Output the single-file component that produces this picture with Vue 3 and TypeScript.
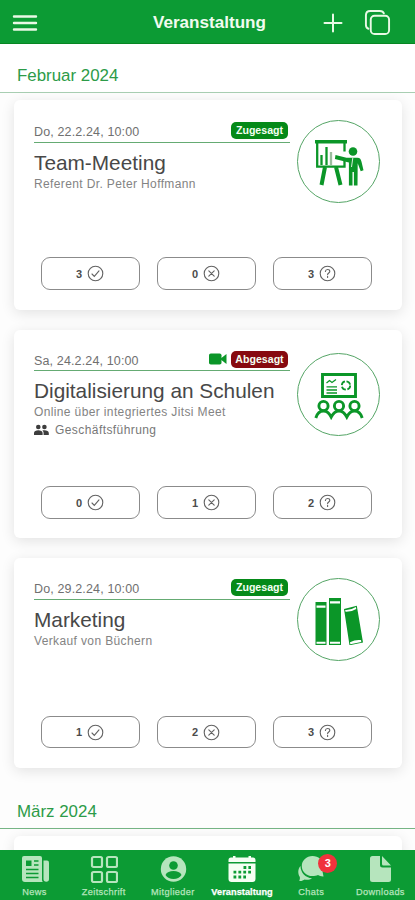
<script setup lang="ts">
type Reply = 'yes' | 'no' | 'maybe'
interface EventItem {
  id: string
  date: string
  title: string
  subtitle: string
  group?: string
  online?: boolean
  status: 'Zugesagt' | 'Abgesagt'
  icon: 'presenter' | 'class' | 'books'
  counts: { kind: Reply; value: number }[]
}
interface Tab {
  label: string
  icon: string
  active?: boolean
  badge?: number
}

const replies = (yes: number, no: number, maybe: number): EventItem['counts'] => [
  { kind: 'yes', value: yes },
  { kind: 'no', value: no },
  { kind: 'maybe', value: maybe },
]

const events: EventItem[] = [
  {
    id: 'team',
    date: 'Do, 22.2.24, 10:00',
    title: 'Team-Meeting',
    subtitle: 'Referent Dr. Peter Hoffmann',
    status: 'Zugesagt',
    icon: 'presenter',
    counts: replies(3, 0, 3),
  },
  {
    id: 'digital',
    date: 'Sa, 24.2.24, 10:00',
    title: 'Digitalisierung an Schulen',
    subtitle: 'Online über integriertes Jitsi Meet',
    group: 'Geschäftsführung',
    online: true,
    status: 'Abgesagt',
    icon: 'class',
    counts: replies(0, 1, 2),
  },
  {
    id: 'marketing',
    date: 'Do, 29.2.24, 10:00',
    title: 'Marketing',
    subtitle: 'Verkauf von Büchern',
    status: 'Zugesagt',
    icon: 'books',
    counts: replies(1, 2, 3),
  },
]

const tabs: Tab[] = [
  { label: 'News', icon: 'news' },
  { label: 'Zeitschrift', icon: 'grid' },
  { label: 'Mitglieder', icon: 'person' },
  { label: 'Veranstaltung', icon: 'calendar', active: true },
  { label: 'Chats', icon: 'chat', badge: 3 },
  { label: 'Downloads', icon: 'file' },
]
</script>

<template>
  <div class="screen">
    <header class="topbar">
      <button class="bar-btn" aria-label="Menü">
        <svg width="26" height="18" viewBox="0 0 26 18" class="line-icon menu">
          <path d="M2 2.500h22M2 9h22M2 15.500h22" />
        </svg>
      </button>
      <h1>Veranstaltung</h1>
      <div class="bar-actions">
        <button class="bar-btn plus" aria-label="Neu">
          <svg width="20" height="20" viewBox="0 0 20 20" class="line-icon">
            <path d="M10 1.500v17M1.500 10h17" />
          </svg>
        </button>
        <button class="bar-btn" aria-label="Kopien">
          <svg width="27" height="27" viewBox="0 0 28 28" class="line-icon">
            <rect x="7" y="7" width="19" height="19" rx="4" />
            <path d="M4.600 20.500C2.800 19.800 2 18.500 2 16.500V6.500C2 3.500 3.500 2 6.500 2h10C18.500 2 20 2.800 20.600 4.500" />
          </svg>
        </button>
      </div>
    </header>

    <main class="content">
      <h2 class="month">Februar 2024</h2>
      <div class="cards">
        <article v-for="e in events" :key="e.id" class="card" :class="'card-' + e.id">
          <div class="top">
            <div class="info">
              <div class="meta">
                <span class="date">{{ e.date }}</span>
                <svg v-if="e.online" class="video" width="18" height="12" viewBox="0 0 18 12">
                  <rect x="0" y="0.500" width="12.500" height="11" rx="1.800" />
                  <path d="M12 5.300 17.500 1v10L12 6.700z" />
                </svg>
                <span class="badge" :class="{ declined: e.status === 'Abgesagt' }">{{ e.status }}</span>
              </div>
              <h3>{{ e.title }}</h3>
              <p class="sub">{{ e.subtitle }}</p>
              <p v-if="e.group" class="group">
                <svg width="15" height="12" viewBox="0 0 15 12">
                  <circle cx="4.300" cy="3" r="2.300" />
                  <circle cx="10.400" cy="3" r="2.300" />
                  <path d="M0 11V9c0-2 2-2.800 4.300-2.800S8.600 7 8.600 9v2zM9.600 11V9c0-1.100-.5-2-1.200-2.600.6-.2 1.300-.2 2-.2 2.300 0 4.400.8 4.400 2.800v2z" />
                </svg>
                <span>{{ e.group }}</span>
              </p>
            </div>
            <div class="avatar">
              <svg v-if="e.icon === 'presenter'" width="50" height="50" viewBox="0 0 50 50">
                <path d="M1 3h32v3.500H1z" />
                <path d="M3.200 6v23.700h27.300V24M30.500 6v8.500" class="s2" />
                <path d="M11 30 7.500 48M22 30l4.500 18" class="s4" />
                <path d="M7.500 18v10M12.500 10v18" class="s2" />
                <path d="M17 15v13" class="s2 pale" />
                <circle cx="39" cy="14.500" r="4.300" />
                <path d="M21.500 18 32.500 20.800h11c2.500 0 3.300 1.500 4 4l2 8.500-2.800 1-3-8-.2 22.200h-3.600V35h-1.400v13.500h-3.600V25.500l-14-3.500z" />
                <path d="m38.800 21-1.300 9" class="slit" />
              </svg>
              <svg v-else-if="e.icon === 'class'" width="50" height="50" viewBox="0 0 50 50">
                <path d="M8.500 4.500h33v22h-33z" class="s3" />
                <path d="m12.500 13 3-2.500 2.500 2 4-3M12.500 16.800h10.500M12.500 20h10.500M12.500 23h10.500" class="s1" />
                <circle cx="32" cy="15.500" r="4.200" class="s1 ring" />
                <g class="s3">
                  <circle cx="9.500" cy="36" r="4.600" />
                  <circle cx="25" cy="36" r="4.600" />
                  <circle cx="40.500" cy="36" r="4.600" />
                  <path d="M1.800 48C3 44 5.500 41 9.500 41s6 2.500 7.700 6c1.800-3.500 3.800-6 7.800-6s6 2.500 7.800 6c1.700-3.500 3.700-6 7.700-6s6.500 3 7.700 7" />
                </g>
              </svg>
              <svg v-else width="50" height="50" viewBox="0 0 50 50">
                <path d="M1.500 7h11v43h-11zM15 3h12v47H15zM30 14l12.800-3.300L49 47.500l-13.500 2.800z" />
                <path d="M2.500 10.500h9v2.300h-9zM2.500 46.800h9v2h-9zM16 6.300h10v2.300H16zM16 46.800h10v2H16zM31.200 15q5.700.4 10.700-2.900l.3 1.800q-5 3.200-10.700 2.900zM36 47.300q5.500-3 11-2.200l.3 1.800-11 2.300z" class="white" />
              </svg>
            </div>
          </div>
          <div class="replies">
            <button v-for="c in e.counts" :key="c.kind" class="reply">
              <span>{{ c.value }}</span>
              <svg width="17" height="17" viewBox="0 0 17 17">
                <circle cx="8.500" cy="8.500" r="7.300" />
                <path v-if="c.kind === 'yes'" d="m5 9 2.300 2.400L12 5.800" />
                <path v-else-if="c.kind === 'no'" d="m5.800 5.800 5.400 5.400M11.200 5.800l-5.400 5.400" />
                <path v-else d="M6.400 6.500c.1-1.300 1-2 2.200-2s2.200.7 2.200 1.900c0 1.500-2.200 1.700-2.200 3.200M8.600 11.300v1.200" />
              </svg>
            </button>
          </div>
        </article>
      </div>
      <h2 class="month second">März 2024</h2>
      <div class="next-card"></div>
    </main>

    <nav class="tabbar">
      <a v-for="t in tabs" :key="t.label" class="tab" :class="{ active: t.active }">
        <span class="tab-icon">
          <svg width="28" height="28" viewBox="0 0 28 28">
            <template v-if="t.icon === 'news'">
              <path d="M3 1h16a2 2 0 0 1 2 2v21.500c0 1 .3 2 .9 2.500H4a3 3 0 0 1-3-3V3a2 2 0 0 1 2-2z" />
              <path d="M22.500 5.500H26a2 2 0 0 1 2 2V24a2.700 2.700 0 0 1-5.500 0z" />
              <path d="M5 5.500h5.500V11H5z" class="cut" />
              <path d="M13 6h4.500M13 10h4.500M5 14.500h12.500M5 18.500h12.500M5 22.500h12.500" class="cutline" />
            </template>
            <g v-else-if="t.icon === 'grid'" class="outline">
              <rect x="2" y="2" width="10" height="10" rx="1.500" />
              <rect x="17" y="2" width="10" height="10" rx="1.500" />
              <rect x="2" y="17" width="10" height="10" rx="1.500" />
              <rect x="17" y="17" width="10" height="10" rx="1.500" />
            </g>
            <template v-else-if="t.icon === 'person'">
              <circle cx="14.500" cy="14" r="12.700" />
              <circle cx="14.500" cy="10.500" r="4.300" class="cut" />
              <path d="M6.500 20c1.300-3 4.300-4 8-4s6.700 1 8 4c-1.700 2.500-4.500 4-8 4s-6.300-1.500-8-4z" class="cut" />
            </template>
            <template v-else-if="t.icon === 'calendar'">
              <path d="M.5 7V5a2.500 2.500 0 0 1 2.500-2.500h2V1h2.500v1.500h13V1H23v1.500h2A2.500 2.500 0 0 1 27.500 5v2zM.5 8.500h27V24a3 3 0 0 1-3 3h-21a3 3 0 0 1-3-3z" />
              <path d="M15.500 12.500h7.500M5.500 17.200h17.500M5.500 22h12.500" class="dots" />
            </template>
            <template v-else-if="t.icon === 'chat'">
              <path d="M3.500 11C3.500 17.500 8.500 23 15 23.200c-1.800 1.300-4.800 2-7.300 1.300-1.500.9-3.400 1.900-5.400 1.500.5-1.700.9-2.800.4-4.200C1 19 .4 14.500 3.500 11z" />
              <path d="M15.500 1c6 0 10.500 4.200 10.500 9.600 0 2.400-.7 4.400-.3 7 .2 1.500.8 3 .8 4-2.200.2-4.200-.9-5.500-1.500-1.500.6-3.500 1-5.500 1C9 21.100 4.800 16.500 4.800 11S9.500 1 15.500 1z" />
            </template>
            <template v-else>
              <path d="M6.500 1H14v9a2.500 2.500 0 0 0 2.500 2.500H25V24.500a2.500 2.500 0 0 1-2.500 2.500h-16A2.500 2.500 0 0 1 4 24.500v-21A2.500 2.500 0 0 1 6.500 1zM16 1l9 9.500h-7.500A1.500 1.500 0 0 1 16 9z" />
            </template>
          </svg>
          <b v-if="t.badge" class="count">{{ t.badge }}</b>
        </span>
        <span class="label">{{ t.label }}</span>
      </a>
    </nav>
  </div>
</template>

<style>
body {
  margin: 0;
  background: #fdfdfd;
}
</style>

<style scoped>
.screen {
  display: flex;
  flex-direction: column;
  width: 415px;
  height: 900px;
  overflow: hidden;
  background: #fdfdfd;
  font-family: "Liberation Sans", Arial, sans-serif;
  color: #444;
}
h1, h2, h3, p { margin: 0; font-weight: 400; }
button {
  padding: 0;
  border: 0;
  background: none;
  font: inherit;
  color: inherit;
}
svg { display: block; flex: none; }

.topbar {
  box-sizing: border-box;
  display: grid;
  grid-template-columns: 90px 1fr 90px;
  align-items: center;
  flex: none;
  height: 44px;
  padding: 2px 24px 0 12px;
  background: #0c9b34;
  border-bottom: 1px solid #078622;
  color: #f0fbef;
}
.topbar h1 {
  padding-left: 16px;
  font-size: 17.1px;
  line-height: 20px;
  font-weight: 700;
  text-align: center;
}
.bar-actions {
  display: flex;
  align-items: center;
  justify-content: flex-end;
  gap: 21px;
}
.line-icon {
  fill: none;
  stroke: #e9f9e5;
  stroke-width: 2;
  stroke-linecap: round;
}
.menu { stroke-width: 2.4; }

.content {
  flex: 1;
  min-height: 0;
  overflow: hidden;
}
.month {
  box-sizing: border-box;
  height: 49px;
  padding: 22px 17px 0;
  border-bottom: 1px solid #a8ceb2;
  background: #fff;
  font-size: 16.9px;
  line-height: 20px;
  color: #2c9b48;
}
.month.second {
  height: 47px;
  padding-top: 20px;
  margin-top: 14px;
  background: none;
  border-color: #76b585;
}
.cards {
  display: flex;
  flex-direction: column;
  gap: 20px;
  padding: 7px 13px 0 14px;
}
.card {
  box-sizing: border-box;
  display: flex;
  flex-direction: column;
  justify-content: space-between;
  height: 210px;
  padding: 20px 22px 20px 20px;
  border-radius: 6px;
  background: #fff;
  box-shadow: 0 3px 14px rgba(0, 0, 0, 0.11);
}
.card-digital { height: 208px; padding-top: 18px; padding-bottom: 19px; }
.card-digital .avatar { margin-top: 5px; }
.card-marketing .info { margin-top: -1px; }
.top {
  display: flex;
  justify-content: space-between;
  align-items: flex-start;
}
.info { width: 256px; }
.meta {
  box-sizing: border-box;
  display: flex;
  align-items: center;
  height: 23px;
  padding: 0 2px 1px 0;
  border-bottom: 1px solid #65ab73;
}
.card-digital .meta { padding-bottom: 0; }
.date {
  flex: 1;
  padding-top: 3px;
  font-size: 12.5px;
  letter-spacing: 0.14px;
  color: #707070;
}
.video { margin-right: 4px; fill: #0b9628; }
.badge {
  box-sizing: border-box;
  width: 57px;
  height: 17px;
  border-radius: 5px;
  background: #058a18;
  color: #f4fff2;
  font-size: 10.6px;
  line-height: 17px;
  font-weight: 700;
  text-align: center;
}
.badge.declined { background: #870a10; }
.info h3 {
  margin-top: 8px;
  font-size: 20.8px;
  line-height: 23px;
  white-space: nowrap;
  color: #484848;
}
.sub {
  margin-top: 2px;
  font-size: 12px;
  line-height: 16px;
  letter-spacing: 0.37px;
  color: #838383;
}
.group {
  display: flex;
  align-items: center;
  gap: 6px;
  margin-top: 2px;
  font-size: 12px;
  line-height: 16px;
  letter-spacing: 0.42px;
  color: #777;
}
.group svg { fill: #3d3d3d; }
.avatar {
  box-sizing: border-box;
  display: flex;
  align-items: center;
  justify-content: center;
  width: 83px;
  height: 83px;
  border: 1px solid #55a566;
  border-radius: 50%;
  fill: #0b9628;
}
.s1, .s2, .s3, .s4 { fill: none; stroke: #0b9628; }
.s1 { stroke-width: 1.3; }
.s2 { stroke-width: 2.3; }
.s3 { stroke-width: 2.9; }
.s4 { stroke-width: 4; }
.pale { stroke: #9bbd9f; }
.slit { stroke: #d9f0dc; stroke-width: 1; fill: none; }
.ring { stroke-width: 1.8; stroke-dasharray: 5 1.6; }
.white { fill: #fff; }

.replies {
  display: flex;
  justify-content: space-between;
  padding: 0 8px 0 7px;
}
.reply {
  box-sizing: border-box;
  display: flex;
  align-items: center;
  justify-content: center;
  gap: 5px;
  width: 99px;
  height: 33px;
  border: 1px solid #8b8b8b;
  border-radius: 9px;
  font-size: 11px;
  font-weight: 700;
  color: #4c4c4c;
}
.card-marketing .reply { height: 32px; }
.reply svg {
  fill: none;
  stroke: #626262;
  stroke-width: 1.1;
  stroke-linecap: round;
}
.reply span { margin-left: -1px; }
.next-card {
  height: 80px;
  margin: 7px 13px 0 14px;
  border-radius: 6px;
  background: #fff;
  box-shadow: 0 3px 14px rgba(0, 0, 0, 0.11);
}

.tabbar {
  display: grid;
  grid-template-columns: repeat(6, 1fr);
  flex: none;
  height: 50px;
  background: #0c9b34;
}
.tab {
  display: flex;
  flex-direction: column;
  align-items: center;
  padding-top: 5px;
  color: #b6e5bd;
  fill: #b6e5bd;
}
.tab.active { color: #fff; fill: #f5fff3; }
.tab-icon { position: relative; }
.cut { fill: #0c9b34; }
.cutline { fill: none; stroke: #0c9b34; stroke-width: 1.5; }
.outline { fill: none; stroke: #b6e5bd; stroke-width: 2.2; }
.dots { fill: none; stroke: #0c9b34; stroke-width: 2.8; stroke-dasharray: 2.8 2.1; }
.label {
  margin-top: 3px;
  font-size: 9.2px;
  line-height: 12px;
  letter-spacing: 0.38px;
  -webkit-text-stroke: 0.25px currentColor;
}
.tab.active .label { font-weight: 700; letter-spacing: 0.05px; }
.count {
  position: absolute;
  left: 21px;
  top: -1px;
  width: 19px;
  height: 19px;
  border-radius: 50%;
  background: #f0323c;
  color: #fff;
  font-size: 11px;
  line-height: 19px;
  text-align: center;
}
</style>
